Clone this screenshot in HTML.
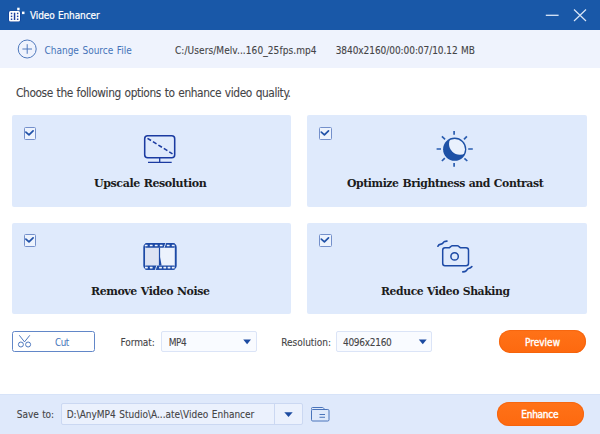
<!DOCTYPE html>
<html><head><meta charset="utf-8">
<style>
*{box-sizing:border-box;margin:0;padding:0}
html,body{width:600px;height:434px;overflow:hidden;background:#fff;font-family:"DejaVu Sans Condensed","DejaVu Sans","Liberation Sans",sans-serif;}
.abs{position:absolute}
.tx{position:absolute;white-space:nowrap;line-height:normal;transform-origin:0 0;display:block}
#title{left:0;top:0;width:600px;height:29.7px;background:#1958a8}
#src{left:0;top:29.7px;width:600px;height:38.1px;background:#eff3fd}
.card{width:279px;height:91px;background:#dfeafc;border-radius:2px}
.cb{position:absolute;width:12.7px;height:12.7px;border:1px solid #7490cb;border-radius:1.5px;background:#edf3fd}
#bottom{left:0;top:394.3px;width:600px;height:40px;background:#dfe9fb}
.sel{background:#f9fbff;border:1px solid #dbe4f7;border-radius:2px}
.btn{background:linear-gradient(#ff7218,#fd690f);border-radius:12px;box-shadow:inset 0 0 0 1px rgba(240,95,10,.55)}
svg{position:absolute;overflow:visible}
</style></head><body>
<div id="title" class="abs">
 <svg style="left:0;top:0" width="40" height="29" viewBox="0 0 40 29">
  <rect x="8.3" y="10.5" width="12.4" height="11.5" rx="2" fill="#0f3f98"/>
  <rect x="9" y="11" width="11" height="10.5" rx="1.5" fill="#fff"/>
  <g fill="#1b3fa0"><rect x="10.8" y="12.7" width="1.5" height="1.5"/><rect x="10.8" y="15.6" width="1.5" height="1.5"/><rect x="10.8" y="18.5" width="1.5" height="1.5"/><rect x="16.9" y="12.7" width="1.5" height="1.5"/><rect x="16.9" y="15.6" width="1.5" height="1.5"/><rect x="16.9" y="18.5" width="1.5" height="1.5"/><rect x="13.8" y="12.7" width="1.5" height="7.3"/></g>
  <rect x="17.2" y="7.7" width="2.4" height="2.6" fill="#fff"/>
  <rect x="22" y="11.6" width="2.5" height="2.5" fill="#fff"/>
 </svg>
 <svg style="left:0;top:0" width="600" height="29" viewBox="0 0 600 29"><path d="M545.8 15.3H558.6" stroke="#dbe7f8" stroke-width="1.3"/><path d="M574 9.5L586 21M586 9.5L574 21" stroke="#dbe7f8" stroke-width="1.2" fill="none"/></svg>
</div>
<div id="src" class="abs"></div>
<svg style="left:0;top:29px" width="60" height="38" viewBox="0 29 60 38"><circle cx="27.2" cy="49" r="9" fill="none" stroke="#4f79bd" stroke-width="1"/><path d="M22.4 49H32M27.2 44.2V53.8" stroke="#4f79bd" stroke-width="1"/></svg>

<div class="abs card" style="left:11.8px;top:114.8px;width:279.5px;height:92px"></div>
<div class="abs card" style="left:307.1px;top:114.8px;width:280px;height:92px"></div>
<div class="abs card" style="left:11.8px;top:223px;width:279.5px;height:91px"></div>
<div class="abs card" style="left:307.1px;top:223px;width:280px;height:91px"></div>
<div class="cb" style="left:23.7px;top:127px"></div><div class="cb" style="left:319.1px;top:127px"></div>
<div class="cb" style="left:23.7px;top:234px"></div><div class="cb" style="left:319.1px;top:234px"></div>

<div class="abs" style="left:11.7px;top:331px;width:83.8px;height:21px;border:1px solid #6287c8;border-radius:2.5px;background:#fff"></div>
<div class="abs sel" style="left:160.7px;top:330.7px;width:95.9px;height:21.5px"></div>
<div class="abs sel" style="left:335.7px;top:330.7px;width:95.9px;height:21.5px"></div>
<div class="abs btn" style="left:499px;top:330px;width:87.2px;height:22.8px"></div>

<div id="bottom" class="abs"></div><div class="abs" style="left:0;top:394.3px;width:600px;height:1.2px;background:#d7e3f8"></div>
<div class="abs sel" style="left:60.6px;top:402.8px;width:242.6px;height:22.2px;background:#ebf1fd;border-color:#cbd8f2"></div>
<div class="abs" style="left:274.2px;top:403.8px;width:1px;height:20.2px;background:#cbd8f2"></div>
<svg style="left:0;top:394px" width="600" height="40" viewBox="0 394 600 40" fill="none"><g stroke="#4a74bb" stroke-width="1"><path d="M311.5 409.5V408.5Q311.5 407.5 312.5 407.5H322.5Q323.3 407.5 323.8 408.3L324.5 409.5"/><rect x="311.5" y="409.5" width="17.5" height="11.5" rx="1.2"/><path d="M319.5 414.5H325M319.5 417.3H325" stroke-width="1.1"/></g></svg>
<div class="abs btn" style="left:497px;top:402px;width:86.8px;height:24px"></div>
<!-- checkmarks -->
<svg style="left:0;top:0" width="600" height="434" viewBox="0 0 600 434" fill="none">
 <g stroke="#2152a8" stroke-width="1.7" stroke-linecap="round" stroke-linejoin="round">
  <path d="M25.9 132.1L29.0 134.9L33.1 130.8"/><path d="M321.3 132.1L324.4 134.9L328.5 130.8"/>
  <path d="M25.9 239.1L29.0 241.9L33.1 237.8"/><path d="M321.3 239.1L324.4 241.9L328.5 237.8"/>
 </g>
 <!-- monitor -->
 <g stroke="#1b3ba1" stroke-width="1.55">
  <rect x="144.7" y="135.7" width="30" height="22" rx="3"/>
  <path d="M147.5 138.3L172.5 153.8" stroke-dasharray="4.2 2.2"/>
  <path d="M159.7 158V162.4M148 162.4H171.7" stroke-width="1.3"/>
 </g>
 <!-- sun -->
 <g>
  <clipPath id="sc"><circle cx="454.7" cy="149.2" r="10.3"/></clipPath>
  <circle cx="454.7" cy="149.2" r="11.6" fill="#1d51a6"/>
  <circle cx="459.9" cy="143.8" r="10.9" fill="#e9f1fd" clip-path="url(#sc)"/>
  <g stroke="#2a5db0" stroke-width="1.7">
   <path d="M454.1 131V134.7M454.1 163.1V166.8M436.6 149H441M468.2 149H472.8"/>
   <path d="M441.9 136.4L445.1 139.3M466.9 136.3L464 139.3M441.9 161L444.8 158.1M467.3 161L464.4 158.3"/>
  </g>
 </g>
 <!-- film -->
 <g>
  <rect x="144.25" y="244.05" width="31.5" height="24.8" rx="3.2" stroke="#1d4aa6" stroke-width="1.9" fill="#ecf2fd"/>
  <rect x="145.2" y="247.6" width="14.2" height="18" fill="#dde3f3"/>
  <path d="M145.4 245.5H174.6M145.4 267.6H174.6" stroke="#1d4aa6" stroke-width="4.4"/>
  <g fill="#eef3fd"><rect x="144.8" y="244.7" width="2.8" height="1.6" rx="0.3"/><rect x="149.8" y="244.7" width="2.8" height="1.6" rx="0.3"/><rect x="154.8" y="244.7" width="2.8" height="1.6" rx="0.3"/><rect x="159.8" y="244.7" width="2.8" height="1.6" rx="0.3"/><rect x="166.8" y="244.7" width="2.8" height="1.6" rx="0.3"/><rect x="171.8" y="244.7" width="2.8" height="1.6" rx="0.3"/><rect x="145.0" y="266.8" width="2.8" height="1.6" rx="0.3"/><rect x="149.8" y="266.8" width="2.8" height="1.6" rx="0.3"/><rect x="159.1" y="266.8" width="2.8" height="1.6" rx="0.3"/><rect x="163.4" y="266.8" width="2.8" height="1.6" rx="0.3"/><rect x="167.6" y="266.8" width="2.8" height="1.6" rx="0.3"/><rect x="171.8" y="266.8" width="2.8" height="1.6" rx="0.3"/></g>
  <path d="M165.7 243.2L164.1 247.8M156.9 265.3L155.3 269.9" stroke="#e6eefc" stroke-width="0.9"/>
  <path d="M158.9 247.6H160.1V257L161.6 265.6H158.9Z" fill="#1d4aa6"/>
 </g>
 <!-- camera -->
 <g stroke="#1d4aa6" stroke-width="1.5" stroke-linejoin="round" stroke-linecap="round">
  <path d="M445 247.8H449.2L451 246.3Q451.5 245.8 452.4 245.8H457.3Q458.2 245.8 458.7 246.3L460.5 247.8H466Q468.5 247.8 468.5 250.3V263.3Q468.5 265.8 466 265.8H445Q442.7 265.8 442.7 263.3V250.3Q442.7 247.8 445 247.8Z"/>
  <circle cx="454.6" cy="256.4" r="3.7"/>
  <path d="M437.9 246.3C438.5 244.5 439.5 244.2 441 244.1C443 244 443.2 241.8 444.6 241.5C445.6 241.3 446.3 241.4 447 241.1" stroke-width="1.6"/>
  <path d="M462.8 271.9C464 271.8 465 271.7 466 271C467.2 270 467 268.8 468.6 268.5C470 268.3 471 267.8 471.9 266.6" stroke-width="1.6"/>
 </g>
 <!-- scissors -->
 <g stroke="#4d78bf" stroke-width="1">
  <path d="M19.3 335.3L24.5 341.9L29.8 335.3" stroke-linejoin="round"/>
  <circle cx="20.9" cy="344.5" r="2.5"/><circle cx="28.1" cy="344.5" r="2.5"/>
 </g>
 <!-- arrows -->
 <g fill="#1c4ba1" stroke="none">
  <path d="M243.2 339.5H251L247.1 344.2Z"/><path d="M418.8 339.5H426.7L422.75 344.2Z"/><path d="M284.3 412.2H292.7L288.5 417Z"/>
 </g>
</svg>
<span class="tx" style='left:30.00px;top:10.00px;font-family:"DejaVu Sans Condensed","DejaVu Sans","Liberation Sans",sans-serif;font-size:10px;font-weight:normal;color:#ffffff;-webkit-text-stroke:0.2px #fff;letter-spacing:-0.126px;word-spacing:0.7px'>Video Enhancer</span>
<span class="tx" style='left:44.50px;top:45.00px;font-family:"DejaVu Sans Condensed","DejaVu Sans","Liberation Sans",sans-serif;font-size:10px;font-weight:normal;color:#4573b9;letter-spacing:-0.011px;word-spacing:0.7px'>Change Source File</span>
<span class="tx" style='left:175.00px;top:45.00px;font-family:"DejaVu Sans Condensed","DejaVu Sans","Liberation Sans",sans-serif;font-size:10px;font-weight:normal;color:#444446;-webkit-text-stroke:0.1px #444446;letter-spacing:0.081px;word-spacing:0.7px'>C:/Users/Melv...160_25fps.mp4</span>
<span class="tx" style='left:335.70px;top:45.00px;font-family:"DejaVu Sans Condensed","DejaVu Sans","Liberation Sans",sans-serif;font-size:10px;font-weight:normal;color:#444446;-webkit-text-stroke:0.1px #444446;letter-spacing:-0.058px;word-spacing:0.7px'>3840x2160/00:00:07/10.12 MB</span>
<span class="tx" style='left:16.00px;top:86.00px;font-family:"DejaVu Sans Condensed","DejaVu Sans","Liberation Sans",sans-serif;font-size:11.8px;font-weight:normal;color:#444446;-webkit-text-stroke:0.1px #444446;letter-spacing:-0.380px;word-spacing:0.7px'>Choose the following options to enhance video quality.</span>
<span class="tx" style='left:94.00px;top:176.00px;font-family:"DejaVu Serif","Liberation Serif",serif;font-size:11.8px;font-weight:bold;color:#1c1c1c;letter-spacing:-0.450px;word-spacing:0.5px;transform:scaleX(0.9375)'>Upscale Resolution</span>
<span class="tx" style='left:347.30px;top:176.00px;font-family:"DejaVu Serif","Liberation Serif",serif;font-size:11.8px;font-weight:bold;color:#1c1c1c;letter-spacing:-0.450px;word-spacing:0.5px;transform:scaleX(0.9212)'>Optimize Brightness and Contrast</span>
<span class="tx" style='left:90.50px;top:283.50px;font-family:"DejaVu Serif","Liberation Serif",serif;font-size:11.8px;font-weight:bold;color:#1c1c1c;letter-spacing:-0.450px;word-spacing:0.5px;transform:scaleX(0.9302)'>Remove Video Noise</span>
<span class="tx" style='left:381.00px;top:283.50px;font-family:"DejaVu Serif","Liberation Serif",serif;font-size:11.8px;font-weight:bold;color:#1c1c1c;letter-spacing:-0.450px;word-spacing:0.5px;transform:scaleX(0.9164)'>Reduce Video Shaking</span>
<span class="tx" style='left:55.00px;top:336.75px;font-family:"DejaVu Sans Condensed","DejaVu Sans","Liberation Sans",sans-serif;font-size:10px;font-weight:normal;color:#4573b9;letter-spacing:-0.450px;word-spacing:0.7px;transform:scaleX(0.9750)'>Cut</span>
<span class="tx" style='left:120.50px;top:336.75px;font-family:"DejaVu Sans Condensed","DejaVu Sans","Liberation Sans",sans-serif;font-size:10px;font-weight:normal;color:#444446;-webkit-text-stroke:0.1px #444446;letter-spacing:-0.065px;word-spacing:0.7px'>Format:</span>
<span class="tx" style='left:168.70px;top:336.75px;font-family:"DejaVu Sans Condensed","DejaVu Sans","Liberation Sans",sans-serif;font-size:10px;font-weight:normal;color:#444446;-webkit-text-stroke:0.1px #444446;letter-spacing:-0.411px;word-spacing:0.7px'>MP4</span>
<span class="tx" style='left:281.30px;top:336.75px;font-family:"DejaVu Sans Condensed","DejaVu Sans","Liberation Sans",sans-serif;font-size:10px;font-weight:normal;color:#444446;-webkit-text-stroke:0.1px #444446;letter-spacing:-0.030px;word-spacing:0.7px'>Resolution:</span>
<span class="tx" style='left:343.00px;top:336.75px;font-family:"DejaVu Sans Condensed","DejaVu Sans","Liberation Sans",sans-serif;font-size:10px;font-weight:normal;color:#444446;-webkit-text-stroke:0.1px #444446;letter-spacing:-0.289px;word-spacing:0.7px'>4096x2160</span>
<span class="tx" style='left:525.00px;top:336.60px;font-family:"DejaVu Sans Condensed","DejaVu Sans","Liberation Sans",sans-serif;font-size:10px;font-weight:normal;color:#ffffff;-webkit-text-stroke:0.35px #fff;letter-spacing:0.003px;word-spacing:0.7px'>Preview</span>
<span class="tx" style='left:16.80px;top:409.20px;font-family:"DejaVu Sans Condensed","DejaVu Sans","Liberation Sans",sans-serif;font-size:10px;font-weight:normal;color:#444446;-webkit-text-stroke:0.1px #444446;letter-spacing:-0.058px;word-spacing:0.7px'>Save to:</span>
<span class="tx" style='left:66.70px;top:409.20px;font-family:"DejaVu Sans Condensed","DejaVu Sans","Liberation Sans",sans-serif;font-size:10px;font-weight:normal;color:#444446;-webkit-text-stroke:0.1px #444446;letter-spacing:-0.003px;word-spacing:0.7px'>D:\AnyMP4 Studio\A...ate\Video Enhancer</span>
<span class="tx" style='left:521.30px;top:409.30px;font-family:"DejaVu Sans Condensed","DejaVu Sans","Liberation Sans",sans-serif;font-size:10px;font-weight:normal;color:#ffffff;-webkit-text-stroke:0.4px #fff;letter-spacing:-0.266px;word-spacing:0.7px'>Enhance</span>
</body></html>
